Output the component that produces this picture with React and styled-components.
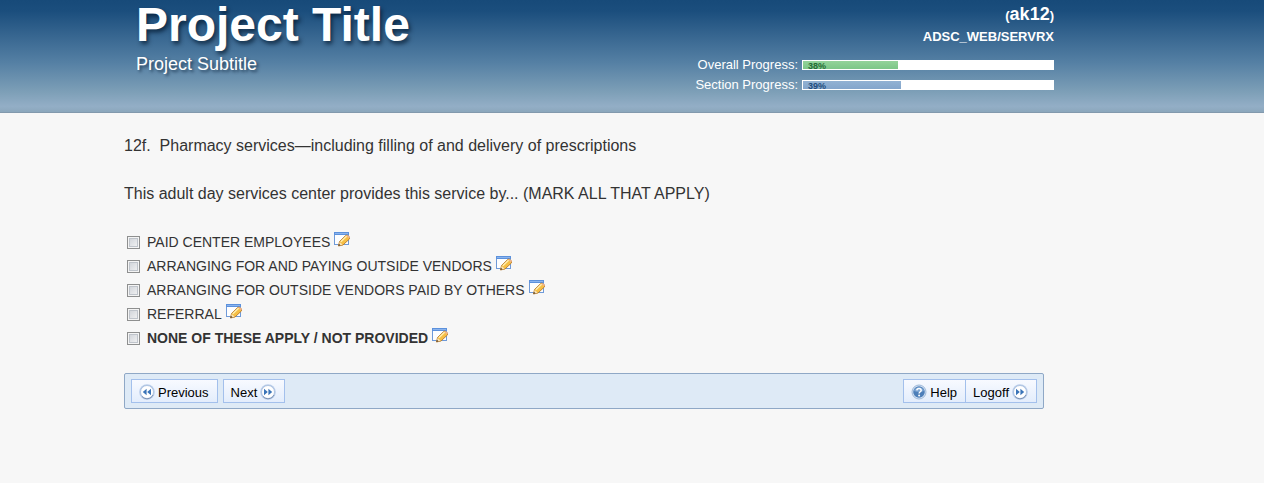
import React from "react";
import styled, { createGlobalStyle } from "styled-components";

const options = [
  { id: "employees", label: "PAID CENTER EMPLOYEES" },
  { id: "paying", label: "ARRANGING FOR AND PAYING OUTSIDE VENDORS" },
  { id: "others", label: "ARRANGING FOR OUTSIDE VENDORS PAID BY OTHERS" },
  { id: "referral", label: "REFERRAL" },
  { id: "none", label: "NONE OF THESE APPLY / NOT PROVIDED", strong: true },
];

function NoteIcon() {
  return (
    <svg width="16" height="16" viewBox="0 0 16 16" aria-hidden="true">
      <rect x="0.5" y="1.5" width="14" height="12" fill="#fdfeff" stroke="#6f9ad8" />
      <path d="M0 1h15v3H0z" fill="#5c91dc" />
      <path d="M1 2h13v1H1z" fill="#8bb4ee" />
      <path d="M4.4 15l1.2-4.6L11.6 4.6q1.2-1 2.4 0l1.2 1.2q1.1 1.2 0 2.4L9 14z" fill="#f6bf45" stroke="#b5782a" strokeWidth="0.9" />
      <path d="M6.8 10.8l6-5.8" stroke="#ffeeb0" strokeWidth="1.5" />
      <path d="M12.4 4.9l2.6 2.7.6-.7q.5-.6-.3-1.4l-1-1q-.7-.6-1.2-.2z" fill="#f0b48c" />
      <path d="M4.7 14.7l1-3.8 2.9 2.9z" fill="#f7e2b8" />
      <path d="M4.4 15l.6-2.2 1.6 1.6z" fill="#5d4528" />
    </svg>
  );
}

function ArrowsIcon({ back }) {
  return (
    <svg width="16" height="16" viewBox="0 0 16 16" aria-hidden="true">
      <circle cx="8" cy="8" r="7.8" fill="#b9cdea" />
      <circle cx="8" cy="8" r="6.5" fill="#fff" stroke="#a5bbdb" strokeWidth="0.8" />
      <path d="M3 12.4A6.6 6.6 0 0 0 14 11" fill="none" stroke="#7c92b3" strokeWidth="1" />
      {back ? (
        <path d="M7.6 4.8v6.4L3.8 8zM12 4.8v6.4L8.2 8z" fill="#3a74b8" />
      ) : (
        <path d="M4 4.8v6.4L7.8 8zM8.4 4.8v6.4L12.2 8z" fill="#3a74b8" />
      )}
    </svg>
  );
}

function HelpIcon() {
  return (
    <svg width="16" height="16" viewBox="0 0 16 16" aria-hidden="true">
      <circle cx="8" cy="8" r="7" fill="#dce8f6" stroke="#8aa9cf" strokeWidth="0.8" />
      <circle cx="8" cy="8" r="5.8" fill="#4d7fb9" />
      <path d="M3 7a5.2 5.2 0 0 1 10 0q-5 2-10 0z" fill="#7ca5d3" />
      <path d="M5.8 6.4q.1-2 2.2-2t2.2 1.8q0 1-1.2 1.8-.9.6-.9 1.4" fill="none" stroke="#fff" strokeWidth="1.5" />
      <circle cx="8.1" cy="11.4" r="1" fill="#fff" />
    </svg>
  );
}

function ProgressRow({ label, value, tone }) {
  return (
    <Progress>
      <span>{label}</span>
      <Track role="progressbar" aria-label={label} aria-valuenow={value} aria-valuemin={0} aria-valuemax={100}>
        <Fill $tone={tone} style={{ width: `${value}%` }}>{value}%</Fill>
      </Track>
    </Progress>
  );
}

function App() {
  return (
    <>
      <GlobalStyle />
      <Header>
        <HeaderInner>
          <div>
            <Title>Project Title</Title>
            <Subtitle>Project Subtitle</Subtitle>
          </div>
          <Status>
            <User>(<b>ak12</b>)</User>
            <Section>ADSC_WEB/SERVRX</Section>
            <ProgressRow label="Overall Progress:" value={38} tone="green" />
            <ProgressRow label="Section Progress:" value={39} tone="blue" />
          </Status>
        </HeaderInner>
      </Header>
      <Main>
        <Question>12f.&nbsp; Pharmacy services—including filling of and delivery of prescriptions</Question>
        <Question>This adult day services center provides this service by... (MARK ALL THAT APPLY)</Question>
        <Options>
          {options.map((o) => (
            <Option key={o.id}>
              <Check type="checkbox" id={o.id} />
              <Label htmlFor={o.id} $strong={o.strong}>{o.label}</Label>
              <NoteButton type="button" aria-label="Add note"><NoteIcon /></NoteButton>
            </Option>
          ))}
        </Options>
        <Toolbar>
          <Group $gap="5px">
            <Button type="button"><ArrowsIcon back />Previous</Button>
            <Button type="button">Next<ArrowsIcon /></Button>
          </Group>
          <Group $gap="0">
            <Button type="button"><HelpIcon />Help</Button>
            <Button type="button" $joined>Logoff<ArrowsIcon /></Button>
          </Group>
        </Toolbar>
      </Main>
    </>
  );
}

export default App;

const GlobalStyle = createGlobalStyle`
  * {
    box-sizing: border-box;
  }
  body {
    margin: 0;
    background: #f7f7f7;
    color: #333;
    font-family: "Liberation Sans", Arial, sans-serif;
  }
`;
const Header = styled.header`
  padding-bottom: 17px;
  border-bottom: 1px solid #8299ad;
  background: linear-gradient(#174a79 0%, #1b4e7d 10%, #376690 32%, #5580a4 56%, #7d9fb7 82%, #93aec6 95%, #8ba7bc 100%);
  color: white;
`;
const HeaderInner = styled.div`
  display: flex;
  justify-content: space-between;
  max-width: 1016px;
  margin: 0 auto;
  padding: 0 86px 0 12px;
`;
const Title = styled.h1`
  margin: 0;
  font-size: 48px;
  line-height: 50px;
  text-shadow: 2px 3px 4px rgba(0, 20, 40, 0.7);
`;
const Subtitle = styled.p`
  margin: 3px 0 0;
  font-size: 18px;
  line-height: 22px;
  text-shadow: 2px 2px 3px rgba(0, 20, 40, 0.6);
`;
const Status = styled.div`
  display: flex;
  flex-direction: column;
  align-items: flex-end;
`;
const User = styled.div`
  padding-top: 3px;
  font-size: 13px;
  font-weight: bold;
  line-height: 22px;
  b {
    font-size: 18px;
  }
`;
const Section = styled.div`
  margin-bottom: 8px;
  font-size: 13px;
  font-weight: bold;
  line-height: 20px;
`;
const Progress = styled.div`
  display: flex;
  align-items: center;
  gap: 4px;
  font-size: 13px;
  line-height: 20px;
`;
const Track = styled.div`
  width: 252px;
  height: 10px;
  padding: 1px;
  background: white;
`;
const Fill = styled.div`
  height: 8px;
  padding-left: 5px;
  background: ${(props) => (props.$tone === "green" ? "linear-gradient(#93d39a, #7cc687)" : "linear-gradient(#92b2d3, #83a5cb)")};
  color: ${(props) => (props.$tone === "green" ? "#256b35" : "#1f4d7c")};
  font-size: 9px;
  font-weight: bold;
  line-height: 10px;
`;
const Main = styled.main`
  max-width: 1016px;
  margin: 0 auto;
  padding: 21px 96px 20px 0;
`;
const Question = styled.p`
  margin: 0 0 24px;
  font-size: 16px;
  line-height: 24px;
`;
const Options = styled.div`
  padding-left: 3px;
`;
const Option = styled.div`
  display: flex;
  align-items: center;
  height: 24px;
`;
const Check = styled.input`
  appearance: none;
  width: 13px;
  height: 13px;
  margin: 0 7px 0 0;
  border: 1px solid #8e8f8f;
  background: linear-gradient(135deg, #cbcfd5, #f6f6f6);
  box-shadow: inset 0 0 0 1px #f4f4f4, inset 0 0 0 2px #bfc4cb;
  &:checked {
    background: #4b6d9b;
  }
`;
const Label = styled.label`
  font-size: 14px;
  font-weight: ${(props) => (props.$strong ? "bold" : "normal")};
  line-height: 24px;
`;
const NoteButton = styled.button`
  display: flex;
  margin: 0 0 6px 4px;
  padding: 0;
  border: 0;
  background: none;
  cursor: pointer;
`;
const Toolbar = styled.nav`
  display: flex;
  justify-content: space-between;
  margin-top: 23px;
  padding: 5px 6px;
  border: 1px solid #8fa8c6;
  border-radius: 2px;
  background: #deeaf6;
`;
const Group = styled.div`
  display: flex;
  gap: ${(props) => props.$gap};
`;
const Button = styled.button`
  display: flex;
  align-items: center;
  gap: 3px;
  height: 24px;
  margin-left: ${(props) => (props.$joined ? "-1px" : "0")};
  padding: 2px 8px 0 7px;
  border: 1px solid #a3c0ec;
  background: linear-gradient(#f8faff, #e3edfc);
  color: black;
  font-family: "Liberation Sans", Arial, sans-serif;
  font-size: 13px;
  cursor: pointer;
`;
